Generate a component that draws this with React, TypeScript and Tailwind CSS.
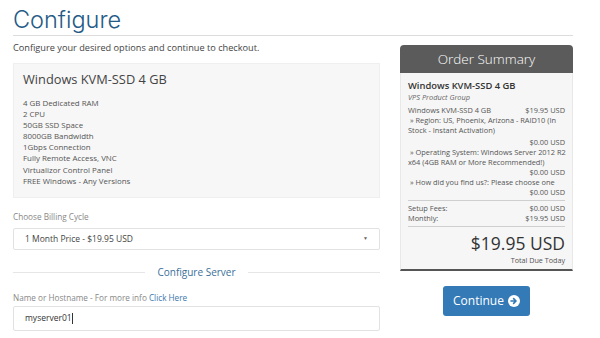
import React from 'react';

const features = [
  '4 GB Dedicated RAM',
  '2 CPU',
  '50GB SSD Space',
  '8000GB Bandwidth',
  '1Gbps Connection',
  'Fully Remote Access, VNC',
  'Virtualizor Control Panel',
  'FREE Windows - Any Versions',
];

const Row: React.FC<{ left?: string; right?: string; className?: string }> = ({ left, right, className }) => (
  <div className={`flex justify-between h-[10px] leading-[10px] whitespace-nowrap ${className ?? ''}`}>
    <span>{left}</span>
    <span>{right}</span>
  </div>
);

const ArrowCircle: React.FC = () => (
  <svg width="12" height="12" viewBox="0 0 16 16" className="ml-[4px]">
    <circle cx="8" cy="8" r="8" fill="#ffffff" />
    <path d="M4 8h6.5M7.5 4.8 10.7 8 7.5 11.2" stroke="#337ab7" strokeWidth="2.2" fill="none" strokeLinecap="round" strokeLinejoin="round" />
  </svg>
);

const App: React.FC = () => {
  return (
    <div className="w-[600px] h-[338px] overflow-hidden bg-white font-['Open_Sans',sans-serif] text-[#555]">
      <div className="ml-[13px] w-[560px]">
        <h1 className="pt-[6px] h-[35px] text-[23.5px] leading-[28px] text-[#255b86] font-['Inter',sans-serif] font-light">
          Configure
        </h1>
        <div className="border-t border-[#dcdcdc]" />

        <div className="flex gap-[20px] mt-[5px]">
          {/* left column */}
          <div className="w-[367px] flex flex-col">
            <p className="h-[14px] leading-[14px] text-[9.2px] text-[#444]">
              Configure your desired options and continue to checkout.
            </p>

            <div className="mt-[8px] h-[135px] bg-[#f7f7f7] border border-[#efefef] px-[9px] pt-[6px]">
              <h2 className="text-[12.8px] leading-[18px] text-[#444]">Windows KVM-SSD 4 GB</h2>
              <ul className="mt-[10px] text-[7.9px] leading-[11.1px] text-[#555]">
                {features.map((f) => (
                  <li key={f}>{f}</li>
                ))}
              </ul>
            </div>

            <label className="mt-[13px] h-[12px] leading-[12px] text-[8.2px] text-[#888]">Choose Billing Cycle</label>
            <div className="mt-[5px] h-[22px] border border-[#e2e2e2] rounded-[2px] flex items-center justify-between px-[11px] text-[8.5px] text-[#444]">
              <span>1 Month Price - $19.95 USD</span>
              <span className="text-[5px] text-[#666]">▼</span>
            </div>

            <div className="mt-[15px] h-[14px] flex items-center gap-[12px]">
              <div className="flex-1 border-t border-[#e6e6e6]" />
              <span className="text-[10px] leading-[14px] text-[#3b6f99]">Configure Server</span>
              <div className="flex-1 border-t border-[#e6e6e6]" />
            </div>

            <label className="mt-[13px] h-[12px] leading-[12px] text-[8.2px] text-[#888]">
              Name or Hostname - For more info <span className="text-[#3d78ad]">Click Here</span>
            </label>
            <div className="mt-[2px] h-[25px] border border-[#e2e2e2] rounded-[2px] flex items-center px-[11px] text-[8.5px] text-[#333]">
              myserver01<span className="inline-block w-px h-[11px] bg-[#333]" />
            </div>
          </div>

          {/* right column */}
          <div className="w-[173px] flex flex-col mt-[4px]">
            <div className="h-[28px] bg-[#5b5b5b] rounded-t-[4px] flex items-center justify-center text-white text-[13.5px] font-light">
              Order Summary
            </div>
            <div className="bg-[#f6f6f6] border-x border-[#e8e8e8] border-b-2 border-b-[#555] px-[7px] pt-[7px] pb-[4px] text-[7.4px] text-[#555]">
              <div className="h-[12px] leading-[12px] text-[9.4px] font-semibold text-[#333]">Windows KVM-SSD 4 GB</div>
              <div className="h-[10px] leading-[10px] italic text-[#666]">VPS Product Group</div>
              <Row className="mt-[3px]" left="Windows KVM-SSD 4 GB" right="$19.95 USD" />
              <Row left={'\u00a0» Region: US, Phoenix, Arizona - RAID10 (In'} />
              <Row left="Stock - Instant Activation)" />
              <Row className="mt-[2px]" right="$0.00 USD" />
              <Row left={'\u00a0» Operating System: Windows Server 2012 R2'} />
              <Row left="x64 (4GB RAM or More Recommended!)" />
              <Row right="$0.00 USD" />
              <Row left={'\u00a0» How did you find us?: Please choose one'} />
              <Row right="$0.00 USD" />
              <div className="mt-[3px] border-t border-[#cfcfcf]" />
              <Row className="mt-[2px]" left="Setup Fees:" right="$0.00 USD" />
              <Row left="Monthly:" right="$19.95 USD" />
              <div className="mt-[3px] border-t border-[#cfcfcf]" />
              <div className="mt-[4px] h-[24px] leading-[24px] text-right text-[17.5px] text-[#333]">$19.95 USD</div>
              <div className="h-[10px] leading-[10px] text-right text-[7.2px] text-[#555]">Total Due Today</div>
            </div>

            <div className="mt-[15px] flex justify-center">
              <button className="w-[87px] h-[30px] rounded-[3px] bg-[#337ab7] text-white text-[12px] flex items-center justify-center">
                Continue
                <ArrowCircle />
              </button>
            </div>
          </div>
        </div>
      </div>
    </div>
  );
};

export default App;
